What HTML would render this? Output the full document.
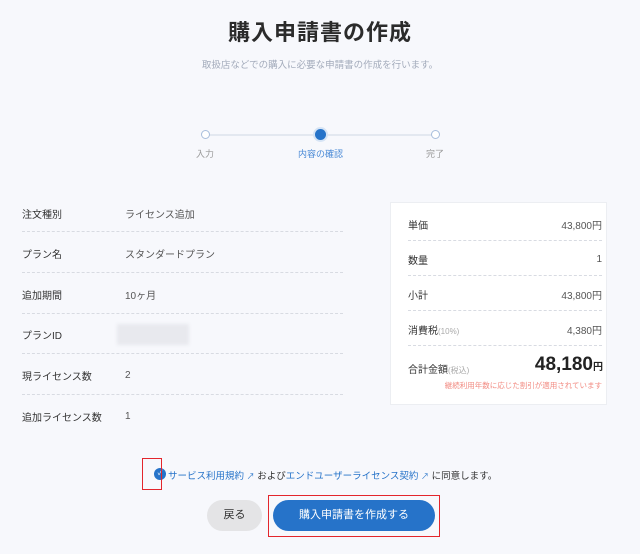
<!DOCTYPE html>
<html><head><meta charset="utf-8"><style>
*{margin:0;padding:0;box-sizing:border-box}
body{width:640px;height:554px;background:#f7f8fc;font-family:"Liberation Sans","Noto Sans CJK JP",sans-serif;color:#333;position:relative;overflow:hidden}
.a{position:absolute;white-space:nowrap}
.t{left:0;width:640px;text-align:center}
.dl{position:absolute;border-top:1px dashed #d8dbe2;height:0}
.lab{font-size:10px;color:#333;left:22px}
.val{font-size:10px;color:#555;left:125px}
.rl{font-size:10px;color:#333;left:408px}
.rv{font-size:10px;color:#555;right:38px}
</style></head><body>
<div class="a t" style="top:15px;font-size:22px;font-weight:bold;color:#2b2b2b;letter-spacing:1px">購入申請書の作成</div>
<div class="a t" style="top:57px;font-size:9.5px;color:#a3abbb">取扱店などでの購入に必要な申請書の作成を行います。</div>
<div style="position:absolute;left:205px;top:134px;width:230px;height:2px;background:#e3e8f0"></div>
<div style="position:absolute;left:201px;top:130px;width:9px;height:9px;border-radius:50%;border:1px solid #a8bedc;background:#fff"></div>
<div style="position:absolute;left:315px;top:129px;width:11px;height:11px;border-radius:50%;background:#2673c9;box-shadow:0 0 0 2px #d6e4f5"></div>
<div style="position:absolute;left:431px;top:130px;width:9px;height:9px;border-radius:50%;border:1px solid #a8bedc;background:#fff"></div>
<div class="a" style="left:196px;top:147px;font-size:9px;color:#999">入力</div>
<div class="a" style="left:298px;top:147px;font-size:9px;color:#4a8ad6">内容の確認</div>
<div class="a" style="left:426px;top:147px;font-size:9px;color:#999">完了</div>

<div class="a lab" style="top:206px">注文種別</div><div class="a val" style="top:206px">ライセンス追加</div>
<div class="dl" style="left:22px;width:321px;top:231px"></div>
<div class="a lab" style="top:246px">プラン名</div><div class="a val" style="top:246px">スタンダードプラン</div>
<div class="dl" style="left:22px;width:321px;top:272px"></div>
<div class="a lab" style="top:287px">追加期間</div><div class="a val" style="top:287px">10ヶ月</div>
<div class="dl" style="left:22px;width:321px;top:313px"></div>
<div class="a lab" style="top:327px">プランID</div>
<div style="position:absolute;left:117px;top:324px;width:72px;height:21px;background:#e8e9ee;filter:blur(1.5px)"></div>
<div class="dl" style="left:22px;width:321px;top:353px"></div>
<div class="a lab" style="top:368px">現ライセンス数</div><div class="a val" style="top:370px">2</div>
<div class="dl" style="left:22px;width:321px;top:394px"></div>
<div class="a lab" style="top:409px">追加ライセンス数</div><div class="a val" style="top:411px">1</div>

<div style="position:absolute;left:390px;top:202px;width:217px;height:203px;background:#fff;border:1px solid #eceef2"></div>
<div class="a rl" style="top:217px">単価</div><div class="a rv" style="top:217px">43,800円</div>
<div class="dl" style="left:408px;width:194px;top:240px"></div>
<div class="a rl" style="top:252px">数量</div><div class="a rv" style="top:254px">1</div>
<div class="dl" style="left:408px;width:194px;top:275px"></div>
<div class="a rl" style="top:287px">小計</div><div class="a rv" style="top:287px">43,800円</div>
<div class="dl" style="left:408px;width:194px;top:310px"></div>
<div class="a rl" style="top:322px">消費税<span style="font-size:8px;color:#aaa">(10%)</span></div><div class="a rv" style="top:322px">4,380円</div>
<div class="dl" style="left:408px;width:194px;top:345px"></div>
<div class="a rl" style="top:361px">合計金額<span style="font-size:8px;color:#aaa">(税込)</span></div>
<div class="a" style="right:37px;top:354px;font-size:19px;font-weight:bold;color:#222">48,180<span style="font-size:10px">円</span></div>
<div class="a" style="right:38px;top:380px;font-size:7.5px;color:#f28b82">継続利用年数に応じた割引が適用されています</div>

<div style="position:absolute;left:154px;top:468px;width:12px;height:12px;border-radius:50%;background:#2673c9;color:#fff;font-size:7px;line-height:12px;text-align:center">✓</div>
<div style="position:absolute;left:142px;top:458px;width:20px;height:32px;border:1.5px solid #e3262c"></div>
<div class="a" style="left:168px;top:468px;font-size:9.5px;color:#333"><span style="color:#2673c9">サービス利用規約 <span style="font-size:8px">↗</span></span> および<span style="color:#2673c9">エンドユーザーライセンス契約 <span style="font-size:8px">↗</span></span> に同意します。</div>

<div style="position:absolute;left:207px;top:500px;width:55px;height:31px;border-radius:16px;background:#e4e4e6;font-size:11px;line-height:31px;text-align:center;color:#333">戻る</div>
<div style="position:absolute;left:273px;top:500px;width:162px;height:31px;border-radius:16px;background:#2673c9;font-size:11px;line-height:31px;text-align:center;color:#fff">購入申請書を作成する</div>
<div style="position:absolute;left:268px;top:495px;width:172px;height:42px;border:1.5px solid #e3262c"></div>
</body></html>
